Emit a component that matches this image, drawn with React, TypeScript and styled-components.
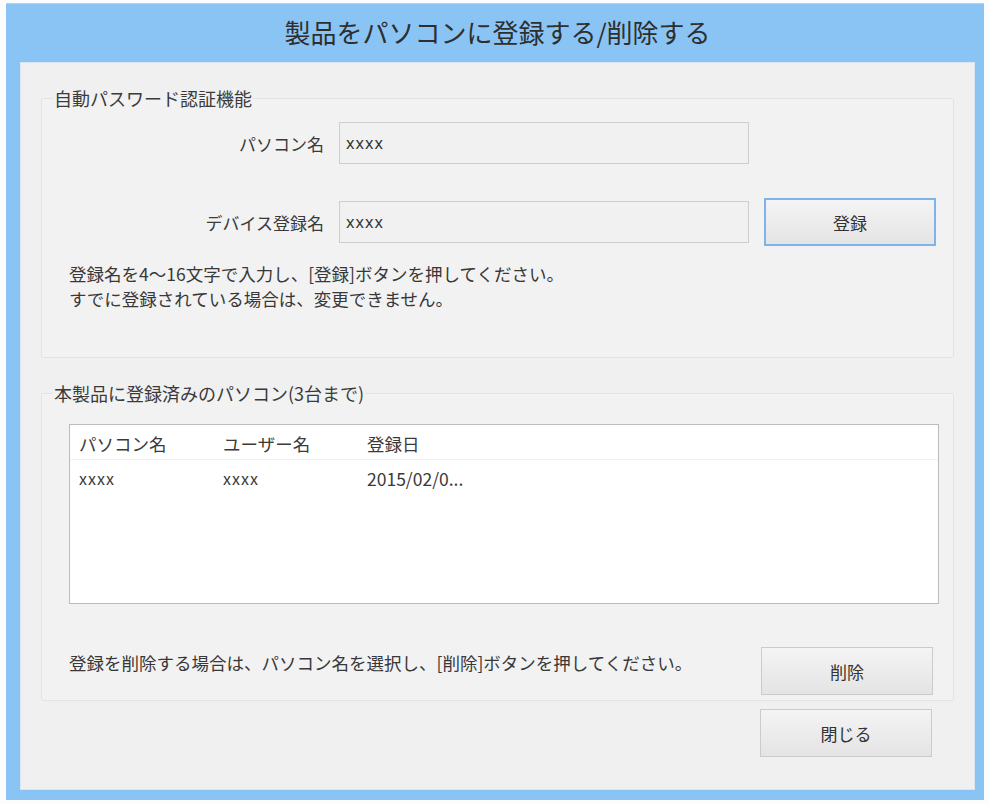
import React from "react"
import styled, { createGlobalStyle } from "styled-components"

const GlobalStyle = createGlobalStyle`
  html, body {
    margin: 0;
    padding: 0;
    background: #fbfcfd;
  }
  * {
    box-sizing: border-box;
  }
  body {
    font-family: "Noto Sans CJK JP", "Noto Sans", sans-serif;
    color: #343434;
  }
`

const rows = [{ pc: "xxxx", user: "xxxx", date: "2015/02/0..." }]

const App: React.FC = () => {
  return (
    <>
      <GlobalStyle />
      <StyledWindow>
        <TitleBar>製品をパソコンに登録する/削除する</TitleBar>
        <Content>
          <GroupBox $height={271}>
            <Legend>自動パスワード認証機能</Legend>
            <FormGrid>
              <FieldLabel>パソコン名</FieldLabel>
              <TextBox readOnly defaultValue="xxxx" />
              <span />
              <FieldLabel>デバイス登録名</FieldLabel>
              <TextBox readOnly defaultValue="xxxx" />
              <PushButton $focused>登録</PushButton>
            </FormGrid>
            <HelpText $indent={27}>
              登録名を4～16文字で入力し、[登録]ボタンを押してください。
              <br />
              すでに登録されている場合は、変更できません。
            </HelpText>
          </GroupBox>
          <GroupBox $height={319} $top={24}>
            <Legend>本製品に登録済みのパソコン(3台まで)</Legend>
            <ListBox>
              <ListHeader>
                <Cell>パソコン名</Cell>
                <Cell>ユーザー名</Cell>
                <Cell>登録日</Cell>
              </ListHeader>
              {rows.map((r, i) => (
                <ListRow key={i}>
                  <Cell $latin>{r.pc}</Cell>
                  <Cell $latin>{r.user}</Cell>
                  <Cell>{r.date}</Cell>
                </ListRow>
              ))}
            </ListBox>
            <DeleteRow>
              <HelpText $indent={0}>
                登録を削除する場合は、パソコン名を選択し、[削除]ボタンを押してください。
              </HelpText>
              <PushButton>削除</PushButton>
            </DeleteRow>
          </GroupBox>
          <CloseRow>
            <PushButton>閉じる</PushButton>
          </CloseRow>
        </Content>
      </StyledWindow>
    </>
  )
}

const StyledWindow = styled.div`
  margin: 3px 0 0 6px;
  width: 978px;
  height: 797px;
  background: #8ac4f4;
  padding: 0 9px 10px 14px;
  display: flex;
  flex-direction: column;
  border-top: 1px solid #a9d3f7;
`

const TitleBar = styled.div`
  height: 58px;
  display: flex;
  align-items: center;
  justify-content: center;
  font-size: 26px;
  color: #2e2e2e;
  padding-bottom: 3px;
`

const Content = styled.div`
  flex: 1;
  background: #f0f0f0;
  padding: 24px 20px 0 20px;
  display: flex;
  flex-direction: column;
  border: 1px solid #d8e6f2;
`

const GroupBox = styled.fieldset<{ $height: number; $top?: number }>`
  height: ${p => p.$height}px;
  margin: ${p => p.$top || 0}px 0 0 0;
  padding: 0;
  min-inline-size: 0;
  background: #f2f2f2;
  border: 1px solid #e3e3e3;
  border-radius: 2px;
  display: flex;
  flex-direction: column;
`

const Legend = styled.legend`
  font-size: 18px;
  line-height: 22px;
  padding: 0 1px;
  margin-left: 11px;
  color: #3a3a3a;
`

const FormGrid = styled.div`
  display: grid;
  grid-template-columns: 282px 410px 172px;
  grid-auto-rows: 48px;
  column-gap: 15px;
  row-gap: 31px;
  align-items: center;
  margin-top: 10px;
`

const FieldLabel = styled.div`
  font-size: 17px;
  text-align: right;
  color: #3a3a3a;
`

const TextBox = styled.input`
  height: 42px;
  width: 410px;
  border: 1px solid #cdcdcd;
  background: #f1f1f1;
  padding: 0 6px;
  font-family: "Noto Sans", "Noto Sans CJK JP", sans-serif;
  font-size: 16px;
  letter-spacing: 1px;
  color: #333;
  outline: none;
`

const PushButton = styled.button<{ $focused?: boolean }>`
  flex-shrink: 0;
  width: 172px;
  height: 48px;
  background: linear-gradient(#f4f4f4, #e4e4e4);
  border: ${p => (p.$focused ? "2px solid #7db5ea" : "1px solid #cbcbcb")};
  font-family: "Noto Sans CJK JP", sans-serif;
  font-size: 17px;
  color: #333;
  padding: 0;
`

const HelpText = styled.div<{ $indent: number }>`
  font-size: 17.5px;
  line-height: 25px;
  margin: 15px 0 0 ${p => p.$indent}px;
  color: #383838;
`

const ListBox = styled.div`
  margin: 20px 0 0 27px;
  width: 870px;
  height: 180px;
  background: #fff;
  border: 1px solid #bcbcbc;
`

const ListHeader = styled.div`
  display: flex;
  height: 35px;
  align-items: center;
  padding: 3px 0 0 9px;
  border-bottom: 1px solid #f0f0f0;
`

const ListRow = styled.div`
  display: flex;
  height: 36px;
  align-items: center;
  padding-left: 9px;
`

const Cell = styled.div<{ $latin?: boolean }>`
  width: 144px;
  font-size: ${p => (p.$latin ? "16px" : "17.5px")};
  letter-spacing: ${p => (p.$latin ? "1px" : "0")};
  color: #3a3a3a;
`

const DeleteRow = styled.div`
  display: flex;
  justify-content: space-between;
  align-items: flex-start;
  margin: 43px 20px 0 27px;
  & > div {
    margin-top: 3px;
  }
`

const CloseRow = styled.div`
  display: flex;
  justify-content: flex-end;
  padding-right: 22px;
  margin-top: 8px;
`

export default App
